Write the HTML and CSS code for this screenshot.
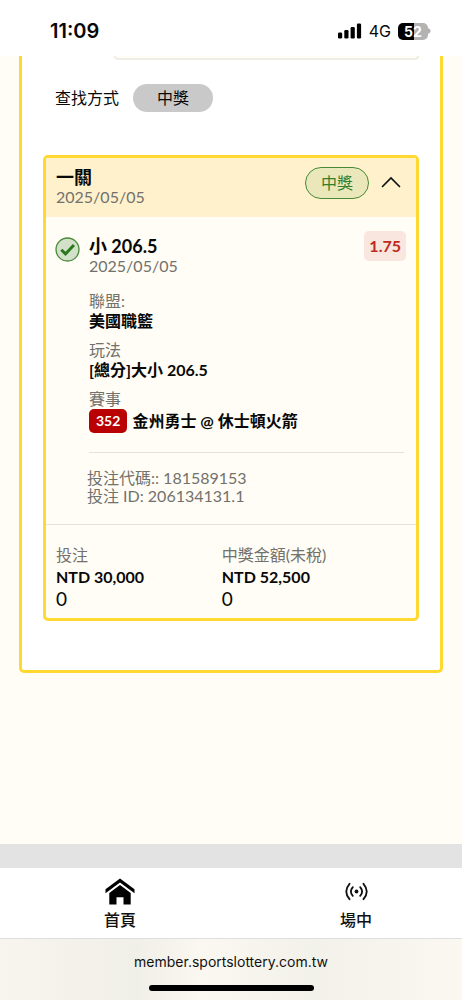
FILE: index.html
```html
<!DOCTYPE html>
<html lang="zh-Hant">
<head>
<meta charset="utf-8">
<meta name="viewport" content="width=device-width, initial-scale=1">
<title>投注紀錄</title>
<link rel="stylesheet" href="styles.css">
</head>
<body>
<div class="screen">
  <header class="status-bar">
    <span class="clock">11:09</span>
    <div class="status-icons">
      <svg class="signal" viewBox="0 0 24 16" width="24" height="16" aria-hidden="true">
        <rect x="0" y="9.500" width="4.200" height="6" rx="1.300"/>
        <rect x="6.300" y="7" width="4.200" height="8.500" rx="1.300"/>
        <rect x="12.600" y="4" width="4.200" height="11.500" rx="1.300"/>
        <rect x="18.900" y="0.500" width="4.200" height="15" rx="1.300"/>
      </svg>
      <span class="network">4G</span>
      <span class="battery"><span class="battery-level"><b>5</b><b>2</b></span><svg width="3" height="6" viewBox="0 0 3 6" aria-hidden="true"><path d="M0 0C3.500 1.500 3.500 4.500 0 6z" fill="#b3b3b3"/></svg></span>
    </div>
  </header>

  <main class="content">
    <section class="panel">
      <div class="field-edge"></div>
      <div class="filter">
        <span class="filter-label">查找方式</span>
        <button class="filter-chip" type="button">中獎</button>
      </div>

      <article class="bet">
        <header class="bet-head">
          <div class="bet-heading">
            <h2 class="title">一關</h2>
            <p class="muted">2025/05/05</p>
          </div>
          <span class="won">中獎</span>
          <button class="toggle" type="button" aria-label="收合">
            <svg width="20" height="12" viewBox="0 0 20 12" aria-hidden="true"><path d="M1.500 10.500L10 2l8.500 8.500" fill="none" stroke="#111" stroke-width="1.700" stroke-linecap="round"/></svg>
          </button>
        </header>

        <div class="selection">
          <svg class="check" width="25" height="25" viewBox="0 0 25 25" aria-hidden="true"><circle cx="12.500" cy="12.500" r="11.500" fill="#d3e1cb" stroke="#478a37" stroke-width="1.300"/><path d="M6.300 12.700l4.200 4.200 8.400-9" fill="none" stroke="#2a7a1c" stroke-width="3"/></svg>
          <div class="selection-main">
            <div class="selection-top">
              <div>
                <h3 class="title">小 206.5</h3>
                <p class="muted">2025/05/05</p>
              </div>
              <span class="odds">1.75</span>
            </div>
            <dl class="details">
              <div><dt>聯盟:</dt><dd>美國職籃</dd></div>
              <div><dt>玩法</dt><dd>[總分]大小 206.5</dd></div>
              <div><dt>賽事</dt><dd class="match"><span class="match-no">352</span><span>金州勇士 @ 休士頓火箭</span></dd></div>
            </dl>
            <div class="codes">
              <p>投注代碼:: 181589153</p>
              <p>投注 ID: 206134131.1</p>
            </div>
          </div>
        </div>

        <footer class="totals">
          <div>
            <p class="total-label">投注</p>
            <p class="total-value">NTD 30,000</p>
            <p class="total-extra">0</p>
          </div>
          <div>
            <p class="total-label">中獎金額(未稅)</p>
            <p class="total-value">NTD 52,500</p>
            <p class="total-extra">0</p>
          </div>
        </footer>
      </article>
    </section>
  </main>

  <div class="strip"></div>
  <nav class="tabs">
    <a class="tab" href="#home">
      <svg width="30" height="30" viewBox="0 0 30 30" aria-hidden="true"><path d="M15 1.500L29.500 12.300v4L15 5.400.500 16.300v-4z"/><path d="M15 7.900l10.700 8V27.500h-7.200v-7.300h-7v7.300H4.300V15.900z"/></svg>
      <span>首頁</span>
    </a>
    <a class="tab" href="#live">
      <svg width="30" height="30" viewBox="0 0 30 30" fill="none" stroke="#111" stroke-width="1.800" stroke-linecap="round" aria-hidden="true"><circle cx="15.500" cy="14.500" r="1.900" fill="#111" stroke="none"/><path d="M11.800 10.100q-3.800 4.400 0 8.800M19.200 10.100q3.800 4.400 0 8.800M8.500 6.800q-6.500 7.700 0 15.400M22.500 6.800q6.500 7.700 0 15.400"/></svg>
      <span>場中</span>
    </a>
  </nav>
  <footer class="browser-bar">
    <span>member.sportslottery.com.tw</span>
    <div class="home-indicator"></div>
  </footer>
</div>
</body>
</html>
```

FILE: styles.css
```css
* { box-sizing: border-box; }

body,
h2, h3, p, dl, dd { margin: 0; }

body {
  font-family: Lato, "Noto Sans CJK TC", sans-serif;
  font-size: 16px;
  line-height: 20px;
  color: #080808;
  background: #fffdf5;
}

button {
  font: inherit;
  color: inherit;
  border: 0;
  padding: 0;
}

.screen {
  display: flex;
  flex-direction: column;
  min-height: 100vh;
}

.status-bar {
  display: flex;
  align-items: center;
  justify-content: space-between;
  height: 56px;
  padding: 6px 31px 0 50px;
  background: #fff;
  font-family: Inter, sans-serif;
}

.clock { font-size: 20px; font-weight: 600; }

.status-icons { display: flex; align-items: center; }
.network { margin: 0 7px; font-size: 16px; }

.battery { display: flex; align-items: center; }
.battery-level {
  display: flex;
  justify-content: center;
  width: 30px;
  border-radius: 5px;
  background: linear-gradient(90deg, #000 52%, #b3b3b3 52%);
  color: #fff;
  font-size: 14px;
  line-height: 17px;
}

.content { flex: 1; padding: 0 19px 24px; }

.panel {
  padding: 0 21px 49px;
  border: 3px solid #ffd932;
  border-top: 0;
  border-radius: 0 0 5px 5px;
  background: #fff;
}

.field-edge {
  height: 4px;
  margin-left: 71px;
  border: 2px solid #efede4;
  border-top: 0;
  border-radius: 0 0 5px 5px;
  background: #fffdf5;
}

.filter {
  display: flex;
  align-items: center;
  gap: 14px;
  padding: 24px 12px 43px;
}
.filter-chip {
  width: 80px;
  height: 28px;
  border-radius: 14px;
  background: #c9c9c9;
}

.bet {
  border: 3px solid #ffd932;
  border-radius: 5px;
  background: #fffdf5;
}

.bet-head {
  display: flex;
  align-items: flex-start;
  padding: 9px 15px 10px 10px;
  background: #fff1cc;
}
.bet-heading { flex: 1; }

.title {
  font-size: 18px;
  font-weight: 700;
  line-height: 20px;
}
.muted { color: #72716c; }

.won {
  margin-right: 12px;
  padding: 5px 15px;
  border: 1px solid #478a37;
  border-radius: 16px;
  background: #eae8ba;
  color: #34802a;
}

.toggle { display: flex; padding-top: 9px; background: none; }

.selection {
  display: flex;
  align-items: flex-start;
  padding: 14px 10px 19px 9px;
}
.check { flex: none; margin: 6px 9px 0 0; }
.selection-main { flex: 1; }

.selection-top {
  display: flex;
  justify-content: space-between;
  align-items: flex-start;
}
.selection-top > div { padding-top: 5px; }

.odds {
  padding: 5px;
  border-radius: 5px;
  background: #f8e6df;
  color: #bd2b22;
  font-weight: 700;
}

.details {
  display: flex;
  flex-direction: column;
  gap: 9px;
  margin: 15px 2px 0 0;
  padding-bottom: 19px;
  border-bottom: 1px solid #e5e2da;
}
.details dt { color: #72716c; }
.details dd { font-weight: 700; }

.match { display: flex; align-items: center; gap: 5px; }
.match-no {
  padding: 2px 7px;
  border-radius: 5px;
  background: #b90003;
  color: #fff;
  font-size: 14px;
}

.codes {
  margin: 16px 0 0 -2px;
  color: #72716c;
  line-height: 18px;
}

.totals {
  display: grid;
  grid-template-columns: 9fr 10fr;
  padding: 19px 10px 8px;
  border-top: 1px solid #e5e2da;
  line-height: 22px;
}
.total-label { color: #72716c; }
.total-value { font-weight: 700; }
.total-extra { font-size: 19px; }

.strip { height: 24px; background: #e3e3e3; }

.tabs {
  display: flex;
  justify-content: space-between;
  padding: 9px 90px 8px 104px;
  border-bottom: 1px solid #dedede;
  background: #fff;
}
.tab {
  display: flex;
  flex-direction: column;
  align-items: center;
  gap: 3px;
  color: #111;
  font-weight: 500;
  text-decoration: none;
}

.browser-bar {
  display: flex;
  flex-direction: column;
  align-items: center;
  gap: 13px;
  padding: 13px 0 9px;
  background: linear-gradient(90deg, #f7f5ed, #f0efe8 30%, #faf8f0 44%, #f2f1ea 68%, #faf8f0);
  color: #111;
  font-family: Inter, sans-serif;
  font-size: 14px;
}
.home-indicator {
  width: 165px;
  height: 6px;
  border-radius: 3px;
  background: #000;
}
```
